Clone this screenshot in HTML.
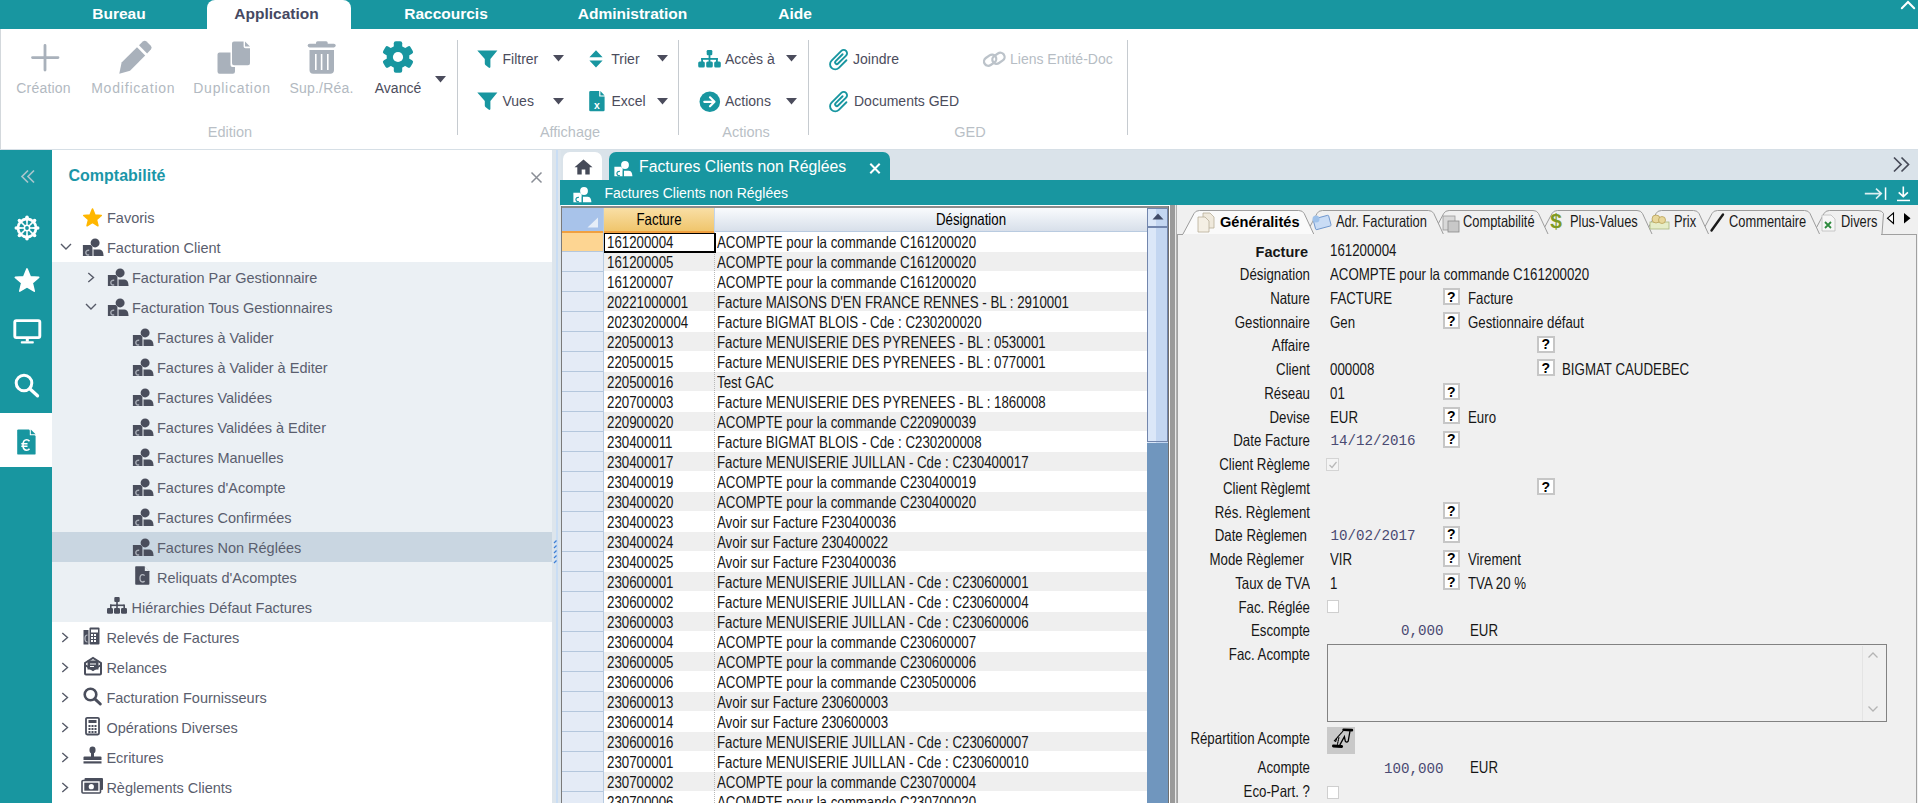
<!DOCTYPE html>
<html><head><meta charset="utf-8"><title>Factures Clients non Réglées</title><style>*{box-sizing:border-box;margin:0;padding:0}
html,body{width:1918px;height:803px;overflow:hidden;background:#fff;font-family:"Liberation Sans",sans-serif}
body{position:relative}
.t{position:absolute;white-space:nowrap}
.b{position:absolute}
svg.b{overflow:visible}</style></head><body>
<div class="b" style="left:0.00px;top:0.00px;width:1918.00px;height:29.00px;background:#1896a0;"></div>
<div class="b" style="left:207px;top:0px;width:144px;height:29px;background:#fff;border-radius:8px 8px 0 0"></div>
<div class="t" style="left:-481.00px;top:4.43px;width:1200px;line-height:19px;font-size:15.50px;color:#fff;font-weight:bold;text-align:center;">Bureau</div>
<div class="t" style="left:-323.50px;top:4.43px;width:1200px;line-height:19px;font-size:15.50px;color:#454862;font-weight:bold;text-align:center;">Application</div>
<div class="t" style="left:-154.00px;top:4.43px;width:1200px;line-height:19px;font-size:15.50px;color:#fff;font-weight:bold;text-align:center;">Raccourcis</div>
<div class="t" style="left:32.50px;top:4.43px;width:1200px;line-height:19px;font-size:15.50px;color:#fff;font-weight:bold;text-align:center;">Administration</div>
<div class="t" style="left:195.00px;top:4.43px;width:1200px;line-height:19px;font-size:15.50px;color:#fff;font-weight:bold;text-align:center;">Aide</div>
<svg class="b" style="left:1900.00px;top:0.00px;" width="16.00" height="10.00" viewBox="0 0 16 10"><path d="M1.8 8.3 L8 2 L14.2 8.3" stroke="#fff" stroke-width="2" fill="none" stroke-linecap="round"/></svg>
<div class="b" style="left:0.00px;top:29.00px;width:1918.00px;height:120.00px;background:#fff;"></div>
<div class="b" style="left:0.00px;top:29.00px;width:1.00px;height:120.00px;background:#d3d8dc;"></div>
<div class="b" style="left:0.00px;top:148.60px;width:1918.00px;height:1.40px;background:#d6dfe6;"></div>
<svg class="b" style="left:30.00px;top:43.00px;" width="30.00" height="30.00" viewBox="0 0 30 30"><path d="M15 2.5 V27 M2.5 14.6 H28" stroke="#a9b1bb" stroke-width="2.8" stroke-linecap="round"/></svg>
<svg class="b" style="left:117.00px;top:39.00px;" width="36.00" height="37.00" viewBox="0 0 36 37"><path d="M2.3 34.7 L4.6 23.5 L20 8.3 L28.2 16.5 L13 31.7 Z" fill="#a9b1bb"/><path d="M22 6.3 L25.8 2.6 Q27.7 0.8 29.6 2.6 L33.8 6.8 Q35.6 8.7 33.8 10.6 L30.1 14.4 Z" fill="#a9b1bb"/></svg>
<svg class="b" style="left:216.00px;top:40.00px;" width="36.00" height="36.00" viewBox="0 0 36 36"><path d="M3.5 12.5 Q1.5 12.5 1.5 14.5 V31.5 Q1.5 33.7 3.5 33.7 H16.8 Q19 33.7 19 31.5 V27 H16.5 Q14.5 27 14.5 25 V12.5 Z" fill="#a9b1bb"/><path d="M18 1.4 Q16 1.4 16 3.4 V23.3 Q16 25.3 18 25.3 H32 Q34 25.3 34 23.3 V8.2 H29.4 Q27.6 8.2 27.6 6.4 V1.4 Z" fill="#a9b1bb"/><path d="M29 1.4 L34 6.6 H29 Z" fill="#a9b1bb"/></svg>
<svg class="b" style="left:306.00px;top:40.00px;" width="32.00" height="36.00" viewBox="0 0 32 36"><rect x="1.7" y="3.8" width="28" height="3.6" rx="1.8" fill="#a9b1bb"/><rect x="10" y="1.2" width="11.7" height="4" rx="1.6" fill="#a9b1bb"/><path d="M3.5 10 H28 V30 Q28 33.7 24.3 33.7 H7.2 Q3.5 33.7 3.5 30 Z" fill="#a9b1bb"/><rect x="9" y="14" width="1.6" height="16" fill="#fff"/><rect x="14.8" y="14" width="1.6" height="16" fill="#fff"/><rect x="21" y="14" width="1.6" height="16" fill="#fff"/></svg>
<svg class="b" style="left:381.00px;top:40.00px;" width="34.00" height="34.00" viewBox="-17 -17 34 34"><g fill="#1896a0"><rect x="-4.2" y="-15.8" width="8.4" height="9" rx="2" transform="rotate(0)"/><rect x="-4.2" y="-15.8" width="8.4" height="9" rx="2" transform="rotate(60)"/><rect x="-4.2" y="-15.8" width="8.4" height="9" rx="2" transform="rotate(120)"/><rect x="-4.2" y="-15.8" width="8.4" height="9" rx="2" transform="rotate(180)"/><rect x="-4.2" y="-15.8" width="8.4" height="9" rx="2" transform="rotate(240)"/><rect x="-4.2" y="-15.8" width="8.4" height="9" rx="2" transform="rotate(300)"/><circle r="11.3"/></g><circle r="5.1" fill="#fff"/></svg>
<svg class="b" style="left:434.50px;top:76.30px;" width="11.00" height="6.60" viewBox="0 0 11 6.6"><path d="M0 0 H11 L5.5 6.6 Z" fill="#4b4c5c"/></svg>
<div class="t" style="left:-556.50px;top:78.65px;width:1200px;line-height:18px;font-size:14.00px;color:#b2b9c1;text-align:center;letter-spacing:0.20px;">Création</div>
<div class="t" style="left:-466.70px;top:78.65px;width:1200px;line-height:18px;font-size:14.00px;color:#b2b9c1;text-align:center;letter-spacing:0.80px;">Modification</div>
<div class="t" style="left:-368.00px;top:78.65px;width:1200px;line-height:18px;font-size:14.00px;color:#b2b9c1;text-align:center;letter-spacing:0.75px;">Duplication</div>
<div class="t" style="left:-278.50px;top:78.65px;width:1200px;line-height:18px;font-size:14.00px;color:#b2b9c1;text-align:center;letter-spacing:0.20px;">Sup./Réa.</div>
<div class="t" style="left:-202.00px;top:78.65px;width:1200px;line-height:18px;font-size:14.00px;color:#4b4c5c;text-align:center;letter-spacing:0.00px;">Avancé</div>
<div class="b" style="left:456.50px;top:40.00px;width:1.30px;height:95.00px;background:#c6cbd0;"></div>
<div class="b" style="left:678.00px;top:40.00px;width:1.30px;height:95.00px;background:#c6cbd0;"></div>
<div class="b" style="left:807.50px;top:40.00px;width:1.30px;height:95.00px;background:#c6cbd0;"></div>
<div class="b" style="left:1127.00px;top:40.00px;width:1.30px;height:95.00px;background:#c6cbd0;"></div>
<div class="t" style="left:-370.00px;top:123.48px;width:1200px;line-height:18px;font-size:14.50px;color:#b9bfc6;text-align:center;">Edition</div>
<div class="t" style="left:-30.00px;top:123.48px;width:1200px;line-height:18px;font-size:14.50px;color:#b9bfc6;text-align:center;">Affichage</div>
<div class="t" style="left:146.00px;top:123.48px;width:1200px;line-height:18px;font-size:14.50px;color:#b9bfc6;text-align:center;">Actions</div>
<div class="t" style="left:370.00px;top:123.48px;width:1200px;line-height:18px;font-size:14.50px;color:#b9bfc6;text-align:center;">GED</div>
<svg class="b" style="left:477.00px;top:49.70px;" width="21.00" height="19.00" viewBox="0 0 21 19"><path d="M0.3 0.6 H20.4 L13.4 9 V16.8 Q13.4 18.6 11.6 17.6 L8.7 15.2 Q7.8 14.6 7.8 13.5 V9 Z" fill="#1896a0"/></svg>
<svg class="b" style="left:477.00px;top:92.40px;" width="21.00" height="19.00" viewBox="0 0 21 19"><path d="M0.3 0.6 H20.4 L13.4 9 V16.8 Q13.4 18.6 11.6 17.6 L8.7 15.2 Q7.8 14.6 7.8 13.5 V9 Z" fill="#1896a0"/></svg>
<div class="t" style="left:502.50px;top:49.65px;line-height:18px;font-size:14.00px;color:#4b4c5c;text-align:left;">Filtrer</div>
<svg class="b" style="left:553.20px;top:55.30px;" width="11.00" height="6.60" viewBox="0 0 11 6.6"><path d="M0 0 H11 L5.5 6.6 Z" fill="#4b4c5c"/></svg>
<div class="t" style="left:502.50px;top:92.45px;line-height:18px;font-size:14.00px;color:#4b4c5c;text-align:left;">Vues</div>
<svg class="b" style="left:553.20px;top:98.30px;" width="11.00" height="6.60" viewBox="0 0 11 6.6"><path d="M0 0 H11 L5.5 6.6 Z" fill="#4b4c5c"/></svg>
<svg class="b" style="left:589.00px;top:49.50px;" width="14.00" height="18.00" viewBox="0 0 14 18"><path d="M7 0.3 L13.6 7.2 H0.4 Z M0.4 10.6 H13.6 L7 17.6 Z" fill="#1896a0"/></svg>
<div class="t" style="left:611.30px;top:49.65px;line-height:18px;font-size:14.00px;color:#4b4c5c;text-align:left;">Trier</div>
<svg class="b" style="left:656.70px;top:55.30px;" width="11.00" height="6.60" viewBox="0 0 11 6.6"><path d="M0 0 H11 L5.5 6.6 Z" fill="#4b4c5c"/></svg>
<svg class="b" style="left:588.50px;top:91.00px;" width="16.00" height="21.00" viewBox="0 0 16 21"><path d="M1.5 0 H10.2 V5.6 H15.6 V19 Q15.6 20.3 14.3 20.3 H1.5 Q0.2 20.3 0.2 19 V1.3 Q0.2 0 1.5 0 Z" fill="#1896a0"/><path d="M11.4 0 L15.6 4.4 H11.4 Z" fill="#1896a0"/><text x="7.9" y="17.6" font-family="Liberation Sans" font-weight="bold" font-size="10.5" fill="#fff" text-anchor="middle">x</text></svg>
<div class="t" style="left:611.50px;top:92.45px;line-height:18px;font-size:14.00px;color:#4b4c5c;text-align:left;">Excel</div>
<svg class="b" style="left:656.70px;top:98.30px;" width="11.00" height="6.60" viewBox="0 0 11 6.6"><path d="M0 0 H11 L5.5 6.6 Z" fill="#4b4c5c"/></svg>
<svg class="b" style="left:698.00px;top:49.50px;" width="23.00" height="18.00" viewBox="0 0 23 18"><g fill="#1896a0"><rect x="8.7" y="0" width="5.6" height="5.2" rx="1.2"/><rect x="10.6" y="4" width="1.8" height="5"/><rect x="3.2" y="8" width="16.6" height="1.8"/><rect x="3.2" y="8" width="1.8" height="5"/><rect x="10.6" y="8" width="1.8" height="5"/><rect x="18" y="8" width="1.8" height="5"/><rect x="0.2" y="11.5" width="6.6" height="6" rx="1.5"/><rect x="8.2" y="11.5" width="6.6" height="6" rx="1.5"/><rect x="16.2" y="11.5" width="6.6" height="6" rx="1.5"/></g></svg>
<div class="t" style="left:725.00px;top:49.65px;line-height:18px;font-size:14.00px;color:#4b4c5c;text-align:left;">Accès à</div>
<svg class="b" style="left:785.60px;top:55.30px;" width="11.00" height="6.60" viewBox="0 0 11 6.6"><path d="M0 0 H11 L5.5 6.6 Z" fill="#4b4c5c"/></svg>
<svg class="b" style="left:699.00px;top:90.50px;" width="22.00" height="22.00" viewBox="0 0 22 22"><circle cx="10.8" cy="10.8" r="10.3" fill="#1896a0"/><path d="M5.3 10.8 H15.5 M11 6.3 L15.5 10.8 L11 15.3" stroke="#fff" stroke-width="2.2" fill="none" stroke-linecap="round" stroke-linejoin="round"/></svg>
<div class="t" style="left:725.00px;top:92.45px;line-height:18px;font-size:14.00px;color:#4b4c5c;text-align:left;">Actions</div>
<svg class="b" style="left:785.60px;top:98.30px;" width="11.00" height="6.60" viewBox="0 0 11 6.6"><path d="M0 0 H11 L5.5 6.6 Z" fill="#4b4c5c"/></svg>
<svg class="b" style="left:827.50px;top:47.50px;" width="22.00" height="22.00" viewBox="0 0 22 22"><g transform="translate(11.2 11.3) rotate(45)"><path d="M-1.2 -6 V3.8 A1.7 1.7 0 0 0 2.2 3.8 V-7.5 A3.35 3.35 0 0 0 -4.5 -7.5 V6.3 A5.15 5.15 0 0 0 5.8 6.3 V-4.4" stroke="#1896a0" stroke-width="1.9" fill="none" stroke-linecap="round"/></g></svg>
<svg class="b" style="left:827.50px;top:89.50px;" width="22.00" height="22.00" viewBox="0 0 22 22"><g transform="translate(11.2 11.3) rotate(45)"><path d="M-1.2 -6 V3.8 A1.7 1.7 0 0 0 2.2 3.8 V-7.5 A3.35 3.35 0 0 0 -4.5 -7.5 V6.3 A5.15 5.15 0 0 0 5.8 6.3 V-4.4" stroke="#1896a0" stroke-width="1.9" fill="none" stroke-linecap="round"/></g></svg>
<div class="t" style="left:853.00px;top:49.65px;line-height:18px;font-size:14.00px;color:#4b4c5c;text-align:left;">Joindre</div>
<div class="t" style="left:854.00px;top:92.45px;line-height:18px;font-size:14.00px;color:#4b4c5c;text-align:left;">Documents GED</div>
<svg class="b" style="left:982.00px;top:49.50px;" width="25.00" height="19.00" viewBox="0 0 25 19"><g stroke="#bcc3ca" stroke-width="2.3" fill="none"><rect x="1.5" y="6" width="13" height="8.5" rx="4.2" transform="rotate(-35 8 10)"/><rect x="10" y="4" width="13" height="8.5" rx="4.2" transform="rotate(-35 16.5 8.3)"/></g></svg>
<div class="t" style="left:1010.00px;top:49.65px;line-height:18px;font-size:14.00px;color:#b6bdc4;text-align:left;">Liens Entité-Doc</div>
<div class="b" style="left:0.00px;top:150.00px;width:52.00px;height:653.00px;background:#1896a0;"></div>
<svg class="b" style="left:20.00px;top:169.00px;" width="16.00" height="15.00" viewBox="0 0 16 15"><path d="M8 1.5 L2 7.5 L8 13.5 M14 1.5 L8 7.5 L14 13.5" stroke="#a9c6cc" stroke-width="1.7" fill="none"/></svg>
<svg class="b" style="left:14.30px;top:215.30px;" width="26.00" height="26.00" viewBox="-13 -13 26 26"><g fill="#fff"><circle r="10.4"/><circle cx="0.00" cy="-10.70" r="1.8"/><circle cx="7.57" cy="-7.57" r="1.8"/><circle cx="10.70" cy="0.00" r="1.8"/><circle cx="7.57" cy="7.57" r="1.8"/><circle cx="0.00" cy="10.70" r="1.8"/><circle cx="-7.57" cy="7.57" r="1.8"/><circle cx="-10.70" cy="0.00" r="1.8"/><circle cx="-7.57" cy="-7.57" r="1.8"/></g><path d="M0.68 -3.54 L0.93 -7.54 A7.6 7.6 0 0 1 4.68 -5.99 L2.02 -2.98 Z M2.98 -2.02 L5.99 -4.68 A7.6 7.6 0 0 1 7.54 -0.93 L3.54 -0.68 Z M3.54 0.68 L7.54 0.93 A7.6 7.6 0 0 1 5.99 4.68 L2.98 2.02 Z M2.02 2.98 L4.68 5.99 A7.6 7.6 0 0 1 0.93 7.54 L0.68 3.54 Z M-0.68 3.54 L-0.93 7.54 A7.6 7.6 0 0 1 -4.68 5.99 L-2.02 2.98 Z M-2.98 2.02 L-5.99 4.68 A7.6 7.6 0 0 1 -7.54 0.93 L-3.54 0.68 Z M-3.54 -0.68 L-7.54 -0.93 A7.6 7.6 0 0 1 -5.99 -4.68 L-2.98 -2.02 Z M-2.02 -2.98 L-4.68 -5.99 A7.6 7.6 0 0 1 -0.93 -7.54 L-0.68 -3.54 Z" fill="#1896a0"/><circle r="1.9" fill="#1896a0"/></svg>
<svg class="b" style="left:13.00px;top:266.00px;" width="28.00" height="28.00" viewBox="0 0 28 28"><polygon points="14.00,2.90 17.25,10.72 25.70,11.40 19.26,16.91 21.23,25.15 14.00,20.73 6.77,25.15 8.74,16.91 2.30,11.40 10.75,10.72" fill="#fff" stroke="#fff" stroke-width="1.6" stroke-linejoin="round"/></svg>
<svg class="b" style="left:12.50px;top:319.00px;" width="29.00" height="26.00" viewBox="0 0 29 26"><rect x="1.8" y="1.6" width="25" height="17" rx="1.5" stroke="#fff" stroke-width="2.9" fill="none"/><rect x="12.8" y="19" width="3" height="3.5" fill="#fff"/><rect x="7.8" y="22.2" width="13" height="2.4" rx="0.8" fill="#fff"/></svg>
<svg class="b" style="left:14.00px;top:373.00px;" width="27.00" height="25.00" viewBox="0 0 27 25"><circle cx="10" cy="10" r="7.8" stroke="#fff" stroke-width="3" fill="none"/><path d="M15.8 15.8 L23.5 22.8" stroke="#fff" stroke-width="3.3" stroke-linecap="round"/></svg>
<div class="b" style="left:0.00px;top:413.00px;width:52.00px;height:54.00px;background:#fff;"></div>
<svg class="b" style="left:16.80px;top:429.00px;" width="19.00" height="26.00" viewBox="0 0 19 26"><path d="M1.4 0.4 H12 L18.6 7 V24.4 Q18.6 25.6 17.4 25.6 H1.4 Q0.2 25.6 0.2 24.4 V1.6 Q0.2 0.4 1.4 0.4 Z" fill="#1896a0"/><path d="M12.8 0.4 L18.6 6.2 H12.8 Z" fill="#fff"/><path d="M13.8 0.4 L18.6 5.2 H13.8 Z" fill="#1896a0"/><path d="M12.5 12.3 Q11.4 10.8 9.7 10.8 Q6 10.8 6 16 Q6 21.2 9.7 21.2 Q11.4 21.2 12.5 19.7 M4.3 14.8 H10.5 M4.3 17.3 H10.5" stroke="#fff" stroke-width="1.6" fill="none"/></svg>
<div class="b" style="left:52.00px;top:150.00px;width:500.00px;height:653.00px;background:#fff;"></div>
<div class="b" style="left:52.00px;top:262.00px;width:500.00px;height:360.00px;background:#ebf0f4;"></div>
<div class="b" style="left:52.00px;top:532.00px;width:500.00px;height:30.00px;background:#c9d6e1;"></div>
<div class="t" style="left:68.50px;top:166.46px;line-height:20px;font-size:16.00px;color:#1a96a8;font-weight:bold;text-align:left;">Comptabilité</div>
<svg class="b" style="left:529.50px;top:170.50px;" width="13.00" height="13.00" viewBox="0 0 13 13"><path d="M1.5 1.5 L11.5 11.5 M11.5 1.5 L1.5 11.5" stroke="#8a8e96" stroke-width="1.5"/></svg>
<svg class="b" style="left:81.50px;top:207.50px;" width="21.00" height="20.00" viewBox="0 0 21 20"><polygon points="10.50,1.10 12.93,6.95 19.25,7.46 14.44,11.58 15.91,17.74 10.50,14.44 5.09,17.74 6.56,11.58 1.75,7.46 8.07,6.95" fill="#ffb700" stroke="#ffb700" stroke-width="1.6" stroke-linejoin="round"/></svg>
<div class="t" style="left:107.00px;top:208.58px;line-height:18px;font-size:14.50px;color:#5a5e6e;text-align:left;">Favoris</div>
<svg class="b" style="left:60.20px;top:243.10px;" width="12.00" height="7.00" viewBox="0 0 12 7"><path d="M1 1 L6 6 L11 1" stroke="#565a68" stroke-width="1.4" fill="none"/></svg><svg class="b" style="left:78.80px;top:236.40px;" width="25.00" height="21.00" viewBox="0 0 25 21"><g fill="#4a4e5c"><circle cx="16.1" cy="6.9" r="4.5"/><path d="M3.9 9 H11.6 L13.4 10.8 V19.9 H3.9 Z"/><path d="M14.9 13.4 H20.3 Q23.4 13.4 24.2 17 L24.6 19.9 H14.9 Z"/></g><rect x="13.4" y="13.4" width="1.4" height="6.5" fill="#8d919b"/><path d="M10.2 14.3 Q7 14 6.8 16.7 Q7 19.3 10.2 19" stroke="#a8adb6" stroke-width="1.4" fill="none"/></svg><div class="t" style="left:107.00px;top:238.58px;line-height:18px;font-size:14.50px;color:#5a5e6e;text-align:left;">Facturation Client</div>
<svg class="b" style="left:87.20px;top:272.10px;" width="8.00" height="11.00" viewBox="0 0 8 11"><path d="M1.3 1 L6.5 5.5 L1.3 10" stroke="#565a68" stroke-width="1.4" fill="none"/></svg><svg class="b" style="left:103.80px;top:266.40px;" width="25.00" height="21.00" viewBox="0 0 25 21"><g fill="#4a4e5c"><circle cx="16.1" cy="6.9" r="4.5"/><path d="M3.9 9 H11.6 L13.4 10.8 V19.9 H3.9 Z"/><path d="M14.9 13.4 H20.3 Q23.4 13.4 24.2 17 L24.6 19.9 H14.9 Z"/></g><rect x="13.4" y="13.4" width="1.4" height="6.5" fill="#8d919b"/><path d="M10.2 14.3 Q7 14 6.8 16.7 Q7 19.3 10.2 19" stroke="#a8adb6" stroke-width="1.4" fill="none"/></svg><div class="t" style="left:132.00px;top:268.58px;line-height:18px;font-size:14.50px;color:#5a5e6e;text-align:left;">Facturation Par Gestionnaire</div>
<svg class="b" style="left:85.20px;top:303.10px;" width="12.00" height="7.00" viewBox="0 0 12 7"><path d="M1 1 L6 6 L11 1" stroke="#565a68" stroke-width="1.4" fill="none"/></svg><svg class="b" style="left:103.80px;top:296.40px;" width="25.00" height="21.00" viewBox="0 0 25 21"><g fill="#4a4e5c"><circle cx="16.1" cy="6.9" r="4.5"/><path d="M3.9 9 H11.6 L13.4 10.8 V19.9 H3.9 Z"/><path d="M14.9 13.4 H20.3 Q23.4 13.4 24.2 17 L24.6 19.9 H14.9 Z"/></g><rect x="13.4" y="13.4" width="1.4" height="6.5" fill="#8d919b"/><path d="M10.2 14.3 Q7 14 6.8 16.7 Q7 19.3 10.2 19" stroke="#a8adb6" stroke-width="1.4" fill="none"/></svg><div class="t" style="left:132.00px;top:298.58px;line-height:18px;font-size:14.50px;color:#5a5e6e;text-align:left;">Facturation Tous Gestionnaires</div>
<svg class="b" style="left:128.80px;top:326.40px;" width="25.00" height="21.00" viewBox="0 0 25 21"><g fill="#4a4e5c"><circle cx="16.1" cy="6.9" r="4.5"/><path d="M3.9 9 H11.6 L13.4 10.8 V19.9 H3.9 Z"/><path d="M14.9 13.4 H20.3 Q23.4 13.4 24.2 17 L24.6 19.9 H14.9 Z"/></g><rect x="13.4" y="13.4" width="1.4" height="6.5" fill="#8d919b"/><path d="M10.2 14.3 Q7 14 6.8 16.7 Q7 19.3 10.2 19" stroke="#a8adb6" stroke-width="1.4" fill="none"/></svg><div class="t" style="left:157.00px;top:328.58px;line-height:18px;font-size:14.50px;color:#5a5e6e;text-align:left;">Factures à Valider</div>
<svg class="b" style="left:128.80px;top:356.40px;" width="25.00" height="21.00" viewBox="0 0 25 21"><g fill="#4a4e5c"><circle cx="16.1" cy="6.9" r="4.5"/><path d="M3.9 9 H11.6 L13.4 10.8 V19.9 H3.9 Z"/><path d="M14.9 13.4 H20.3 Q23.4 13.4 24.2 17 L24.6 19.9 H14.9 Z"/></g><rect x="13.4" y="13.4" width="1.4" height="6.5" fill="#8d919b"/><path d="M10.2 14.3 Q7 14 6.8 16.7 Q7 19.3 10.2 19" stroke="#a8adb6" stroke-width="1.4" fill="none"/></svg><div class="t" style="left:157.00px;top:358.58px;line-height:18px;font-size:14.50px;color:#5a5e6e;text-align:left;">Factures à Valider à Editer</div>
<svg class="b" style="left:128.80px;top:386.40px;" width="25.00" height="21.00" viewBox="0 0 25 21"><g fill="#4a4e5c"><circle cx="16.1" cy="6.9" r="4.5"/><path d="M3.9 9 H11.6 L13.4 10.8 V19.9 H3.9 Z"/><path d="M14.9 13.4 H20.3 Q23.4 13.4 24.2 17 L24.6 19.9 H14.9 Z"/></g><rect x="13.4" y="13.4" width="1.4" height="6.5" fill="#8d919b"/><path d="M10.2 14.3 Q7 14 6.8 16.7 Q7 19.3 10.2 19" stroke="#a8adb6" stroke-width="1.4" fill="none"/></svg><div class="t" style="left:157.00px;top:388.58px;line-height:18px;font-size:14.50px;color:#5a5e6e;text-align:left;">Factures Validées</div>
<svg class="b" style="left:128.80px;top:416.40px;" width="25.00" height="21.00" viewBox="0 0 25 21"><g fill="#4a4e5c"><circle cx="16.1" cy="6.9" r="4.5"/><path d="M3.9 9 H11.6 L13.4 10.8 V19.9 H3.9 Z"/><path d="M14.9 13.4 H20.3 Q23.4 13.4 24.2 17 L24.6 19.9 H14.9 Z"/></g><rect x="13.4" y="13.4" width="1.4" height="6.5" fill="#8d919b"/><path d="M10.2 14.3 Q7 14 6.8 16.7 Q7 19.3 10.2 19" stroke="#a8adb6" stroke-width="1.4" fill="none"/></svg><div class="t" style="left:157.00px;top:418.58px;line-height:18px;font-size:14.50px;color:#5a5e6e;text-align:left;">Factures Validées à Editer</div>
<svg class="b" style="left:128.80px;top:446.40px;" width="25.00" height="21.00" viewBox="0 0 25 21"><g fill="#4a4e5c"><circle cx="16.1" cy="6.9" r="4.5"/><path d="M3.9 9 H11.6 L13.4 10.8 V19.9 H3.9 Z"/><path d="M14.9 13.4 H20.3 Q23.4 13.4 24.2 17 L24.6 19.9 H14.9 Z"/></g><rect x="13.4" y="13.4" width="1.4" height="6.5" fill="#8d919b"/><path d="M10.2 14.3 Q7 14 6.8 16.7 Q7 19.3 10.2 19" stroke="#a8adb6" stroke-width="1.4" fill="none"/></svg><div class="t" style="left:157.00px;top:448.58px;line-height:18px;font-size:14.50px;color:#5a5e6e;text-align:left;">Factures Manuelles</div>
<svg class="b" style="left:128.80px;top:476.40px;" width="25.00" height="21.00" viewBox="0 0 25 21"><g fill="#4a4e5c"><circle cx="16.1" cy="6.9" r="4.5"/><path d="M3.9 9 H11.6 L13.4 10.8 V19.9 H3.9 Z"/><path d="M14.9 13.4 H20.3 Q23.4 13.4 24.2 17 L24.6 19.9 H14.9 Z"/></g><rect x="13.4" y="13.4" width="1.4" height="6.5" fill="#8d919b"/><path d="M10.2 14.3 Q7 14 6.8 16.7 Q7 19.3 10.2 19" stroke="#a8adb6" stroke-width="1.4" fill="none"/></svg><div class="t" style="left:157.00px;top:478.58px;line-height:18px;font-size:14.50px;color:#5a5e6e;text-align:left;">Factures d'Acompte</div>
<svg class="b" style="left:128.80px;top:506.40px;" width="25.00" height="21.00" viewBox="0 0 25 21"><g fill="#4a4e5c"><circle cx="16.1" cy="6.9" r="4.5"/><path d="M3.9 9 H11.6 L13.4 10.8 V19.9 H3.9 Z"/><path d="M14.9 13.4 H20.3 Q23.4 13.4 24.2 17 L24.6 19.9 H14.9 Z"/></g><rect x="13.4" y="13.4" width="1.4" height="6.5" fill="#8d919b"/><path d="M10.2 14.3 Q7 14 6.8 16.7 Q7 19.3 10.2 19" stroke="#a8adb6" stroke-width="1.4" fill="none"/></svg><div class="t" style="left:157.00px;top:508.58px;line-height:18px;font-size:14.50px;color:#5a5e6e;text-align:left;">Factures Confirmées</div>
<svg class="b" style="left:128.80px;top:536.40px;" width="25.00" height="21.00" viewBox="0 0 25 21"><g fill="#4a4e5c"><circle cx="16.1" cy="6.9" r="4.5"/><path d="M3.9 9 H11.6 L13.4 10.8 V19.9 H3.9 Z"/><path d="M14.9 13.4 H20.3 Q23.4 13.4 24.2 17 L24.6 19.9 H14.9 Z"/></g><rect x="13.4" y="13.4" width="1.4" height="6.5" fill="#8d919b"/><path d="M10.2 14.3 Q7 14 6.8 16.7 Q7 19.3 10.2 19" stroke="#a8adb6" stroke-width="1.4" fill="none"/></svg><div class="t" style="left:157.00px;top:538.58px;line-height:18px;font-size:14.50px;color:#5a5e6e;text-align:left;">Factures Non Réglées</div>
<svg class="b" style="left:135.00px;top:565.60px;" width="15.00" height="19.00" viewBox="0 0 15 19"><path d="M1 0.3 H9.5 L14.4 5.2 V17.8 Q14.4 18.7 13.5 18.7 H1 Q0.2 18.7 0.2 17.8 V1.1 Q0.2 0.3 1 0.3 Z" fill="#4a4e5c"/><path d="M9.8 0.3 L14.4 4.9 H9.8 Z" fill="#ebf0f4"/><path d="M9.6 9.6 Q8.8 8.6 7.6 8.6 Q5 8.6 5 12.3 Q5 16 7.6 16 Q8.8 16 9.6 15" stroke="#b4b8c0" stroke-width="1.3" fill="none"/></svg>
<div class="t" style="left:157.00px;top:568.58px;line-height:18px;font-size:14.50px;color:#5a5e6e;text-align:left;">Reliquats d'Acomptes</div>
<svg class="b" style="left:107.00px;top:597.10px;" width="20.00" height="17.00" viewBox="0 0 20 17"><g fill="#4a4e5c"><rect x="7.3" y="0" width="5.4" height="5" rx="1"/><rect x="9.2" y="4" width="1.6" height="4.5"/><rect x="3" y="7.5" width="14" height="1.6"/><rect x="3" y="7.5" width="1.6" height="4"/><rect x="16.4" y="7.5" width="1.6" height="4"/><rect x="9.2" y="7.5" width="1.6" height="4"/><rect x="0" y="11" width="6" height="5.8" rx="1.3"/><rect x="7" y="11" width="6" height="5.8" rx="1.3"/><rect x="14" y="11" width="6" height="5.8" rx="1.3"/></g></svg>
<div class="t" style="left:131.50px;top:598.58px;line-height:18px;font-size:14.50px;color:#5a5e6e;text-align:left;">Hiérarchies Défaut Factures</div>
<svg class="b" style="left:60.80px;top:632.10px;" width="8.00" height="11.00" viewBox="0 0 8 11"><path d="M1.3 1 L6.5 5.5 L1.3 10" stroke="#565a68" stroke-width="1.4" fill="none"/></svg>
<div class="t" style="left:106.40px;top:628.58px;line-height:18px;font-size:14.50px;color:#5a5e6e;text-align:left;">Relevés de Factures</div>
<svg class="b" style="left:60.80px;top:662.10px;" width="8.00" height="11.00" viewBox="0 0 8 11"><path d="M1.3 1 L6.5 5.5 L1.3 10" stroke="#565a68" stroke-width="1.4" fill="none"/></svg>
<div class="t" style="left:106.40px;top:658.58px;line-height:18px;font-size:14.50px;color:#5a5e6e;text-align:left;">Relances</div>
<svg class="b" style="left:60.80px;top:692.10px;" width="8.00" height="11.00" viewBox="0 0 8 11"><path d="M1.3 1 L6.5 5.5 L1.3 10" stroke="#565a68" stroke-width="1.4" fill="none"/></svg>
<div class="t" style="left:106.40px;top:688.58px;line-height:18px;font-size:14.50px;color:#5a5e6e;text-align:left;">Facturation Fournisseurs</div>
<svg class="b" style="left:60.80px;top:722.10px;" width="8.00" height="11.00" viewBox="0 0 8 11"><path d="M1.3 1 L6.5 5.5 L1.3 10" stroke="#565a68" stroke-width="1.4" fill="none"/></svg>
<div class="t" style="left:106.40px;top:718.58px;line-height:18px;font-size:14.50px;color:#5a5e6e;text-align:left;">Opérations Diverses</div>
<svg class="b" style="left:60.80px;top:752.10px;" width="8.00" height="11.00" viewBox="0 0 8 11"><path d="M1.3 1 L6.5 5.5 L1.3 10" stroke="#565a68" stroke-width="1.4" fill="none"/></svg>
<div class="t" style="left:106.40px;top:748.58px;line-height:18px;font-size:14.50px;color:#5a5e6e;text-align:left;">Ecritures</div>
<svg class="b" style="left:60.80px;top:782.10px;" width="8.00" height="11.00" viewBox="0 0 8 11"><path d="M1.3 1 L6.5 5.5 L1.3 10" stroke="#565a68" stroke-width="1.4" fill="none"/></svg>
<div class="t" style="left:106.40px;top:778.58px;line-height:18px;font-size:14.50px;color:#5a5e6e;text-align:left;">Règlements Clients</div>
<svg class="b" style="left:83.00px;top:626.60px;" width="17.00" height="18.00" viewBox="0 0 17 18"><g fill="#4a4e5c"><rect x="0.5" y="3" width="5" height="14.5"/><rect x="6.5" y="0.5" width="10" height="17" rx="1"/></g><g fill="#fff"><rect x="8" y="2.5" width="7" height="3"/><rect x="8" y="7" width="2" height="2"/><rect x="11" y="7" width="2" height="2"/><rect x="8" y="10" width="2" height="2"/><rect x="11" y="10" width="2" height="2"/><rect x="8" y="13" width="2" height="2"/><rect x="11" y="13" width="2" height="2"/></g><path d="M4.5 8 Q2 8 2 11.5 Q2 15 4.5 15" stroke="#b4b8c0" stroke-width="1.2" fill="none"/></svg>
<svg class="b" style="left:82.50px;top:656.60px;" width="20.00" height="18.00" viewBox="0 0 20 18"><path d="M2 6 L10 1 L18 6 V16.5 Q18 17.5 17 17.5 H3 Q2 17.5 2 16.5 Z" fill="none" stroke="#4a4e5c" stroke-width="2"/><rect x="4.5" y="3.5" width="11" height="9" fill="#4a4e5c"/><path d="M2 8 L10 13 L18 8" stroke="#4a4e5c" stroke-width="2" fill="none"/><path d="M7 7 H13 M7 9.5 H11" stroke="#fff" stroke-width="1.2"/></svg>
<svg class="b" style="left:83.00px;top:686.60px;" width="19.00" height="18.00" viewBox="0 0 19 18"><circle cx="7.5" cy="7.5" r="5.8" stroke="#4a4e5c" stroke-width="2.6" fill="none"/><path d="M11.8 11.8 L17.3 17" stroke="#4a4e5c" stroke-width="3" stroke-linecap="round"/></svg>
<svg class="b" style="left:85.00px;top:716.60px;" width="15.00" height="18.00" viewBox="0 0 15 18"><rect x="1" y="0.8" width="13" height="16.7" rx="1.2" fill="none" stroke="#4a4e5c" stroke-width="1.8"/><rect x="3.5" y="3" width="8" height="3" fill="#4a4e5c"/><g fill="#4a4e5c"><rect x="3.5" y="8" width="2" height="2"/><rect x="6.5" y="8" width="2" height="2"/><rect x="9.5" y="8" width="2" height="2"/><rect x="3.5" y="11" width="2" height="2"/><rect x="6.5" y="11" width="2" height="2"/><rect x="9.5" y="11" width="2" height="2"/><rect x="3.5" y="14" width="2" height="2"/><rect x="6.5" y="14" width="2" height="2"/><rect x="9.5" y="14" width="2" height="2"/></g></svg>
<svg class="b" style="left:83.00px;top:745.60px;" width="19.00" height="18.00" viewBox="0 0 19 18"><g fill="#4a4e5c"><rect x="6.5" y="0.5" width="6" height="7" rx="3"/><rect x="8" y="6" width="3" height="5"/><path d="M1.5 10.5 H17.5 Q18.5 10.5 18.5 11.5 V14 H0.5 V11.5 Q0.5 10.5 1.5 10.5 Z"/><rect x="0.5" y="15.3" width="18" height="2.2"/></g></svg>
<svg class="b" style="left:81.00px;top:776.60px;" width="23.00" height="17.00" viewBox="0 0 23 17"><rect x="3.5" y="1" width="18.5" height="12" rx="1" fill="#4a4e5c"/><rect x="1" y="3.5" width="18.5" height="12.5" rx="1" fill="#fff" stroke="#4a4e5c" stroke-width="1.6"/><rect x="3.3" y="5.7" width="14" height="8" fill="#4a4e5c"/><circle cx="10.3" cy="9.7" r="2.6" fill="#fff"/></svg>
<div class="b" style="left:552.00px;top:150.00px;width:9.00px;height:653.00px;background:#dde5ec;"></div>
<div class="b" style="left:556.00px;top:150.00px;width:2.00px;height:653.00px;background:#c9ddf4;"></div>
<svg class="b" style="left:553.00px;top:540.00px;" width="5.00" height="25.00" viewBox="0 0 5 25"><g stroke="#3d7fd6" stroke-width="1.2"><path d="M1 3 L3.5 0.5"/><path d="M1 8 L3.5 5.5"/><path d="M1 13 L3.5 10.5"/><path d="M1 18 L3.5 15.5"/><path d="M1 23 L3.5 20.5"/></g></svg>
<div class="b" style="left:561.00px;top:150.00px;width:1357.00px;height:30.00px;background:#dae3ea;"></div>
<div class="b" style="left:562.5px;top:152px;width:39.5px;height:28px;background:#fff;border-radius:7px 7px 0 0"></div>
<svg class="b" style="left:574.00px;top:159.00px;" width="19.00" height="16.00" viewBox="0 0 19 16"><path d="M9.5 0.5 L18.5 8.3 H15.7 V15.5 H11.3 V10.5 H7.7 V15.5 H3.3 V8.3 H0.5 Z" fill="#454a58"/></svg>
<div class="b" style="left:608.5px;top:152px;width:281px;height:30px;background:#1896a0;border-radius:7px 7px 0 0"></div>
<svg class="b" style="left:611.40px;top:159.10px;" width="21.75" height="18.30" viewBox="0 0 25 21"><g fill="#fff"><circle cx="16.1" cy="6.9" r="4.5"/><path d="M3.9 9 H11.6 L13.4 10.8 V19.9 H3.9 Z"/><path d="M14.9 13.4 H20.3 Q23.4 13.4 24.2 17 L24.6 19.9 H14.9 Z"/></g><rect x="13.4" y="13.4" width="1.4" height="6.5" fill="#1896a0" opacity="0.6"/><path d="M10.2 14.3 Q7 14 6.8 16.7 Q7 19.3 10.2 19" stroke="#1896a0" stroke-width="1.4" fill="none"/></svg>
<div class="t" style="left:639.00px;top:157.23px;line-height:20px;font-size:15.80px;color:#fff;text-align:left;">Factures Clients non Réglées</div>
<svg class="b" style="left:869.00px;top:162.50px;" width="12.00" height="11.00" viewBox="0 0 12 11"><path d="M1.3 0.8 L10.7 10.2 M10.7 0.8 L1.3 10.2" stroke="#fff" stroke-width="2"/></svg>
<svg class="b" style="left:1892.00px;top:156.00px;" width="20.00" height="17.00" viewBox="0 0 20 17"><path d="M2 1.5 L9 8.5 L2 15.5 M9.5 1.5 L16.5 8.5 L9.5 15.5" stroke="#474b58" stroke-width="1.7" fill="none"/></svg>
<div class="b" style="left:560.00px;top:180.00px;width:1358.00px;height:25.00px;background:#1896a0;"></div>
<svg class="b" style="left:570.30px;top:185.30px;" width="21.75" height="18.30" viewBox="0 0 25 21"><g fill="#fff"><circle cx="16.1" cy="6.9" r="4.5"/><path d="M3.9 9 H11.6 L13.4 10.8 V19.9 H3.9 Z"/><path d="M14.9 13.4 H20.3 Q23.4 13.4 24.2 17 L24.6 19.9 H14.9 Z"/></g><rect x="13.4" y="13.4" width="1.4" height="6.5" fill="#1896a0" opacity="0.6"/><path d="M10.2 14.3 Q7 14 6.8 16.7 Q7 19.3 10.2 19" stroke="#1896a0" stroke-width="1.4" fill="none"/></svg>
<div class="t" style="left:604.40px;top:184.35px;line-height:18px;font-size:14.00px;color:#fff;text-align:left;">Factures Clients non Réglées</div>
<svg class="b" style="left:1863.00px;top:186.00px;" width="26.00" height="15.00" viewBox="0 0 26 15"><path d="M1.8 7.6 H18 M13 2.6 L18.3 7.6 L13 12.6" stroke="#fff" stroke-opacity="0.85" stroke-width="1.6" fill="none"/><rect x="21.8" y="1.4" width="1.5" height="12.5" fill="#fff"/></svg>
<svg class="b" style="left:1896.00px;top:186.00px;" width="16.00" height="16.00" viewBox="0 0 16 16"><path d="M7.3 0.6 V10.3 M2.7 6.3 L7.3 10.6 L11.9 6.3" stroke="#fff" stroke-width="1.6" fill="none"/><rect x="1" y="13.7" width="13" height="1.5" fill="#fff"/></svg>
<div class="b" style="left:561.00px;top:205.00px;width:608.00px;height:598.00px;background:#fff;"></div>
<div class="b" style="left:561.00px;top:205.50px;width:608.00px;height:2.00px;background:#8c8c8c;"></div>
<div class="b" style="left:561.00px;top:205.50px;width:1.30px;height:598.00px;background:#7a7a7a;"></div>
<div class="b" style="left:562.30px;top:207.50px;width:40.70px;height:24.00px;background:#a8c3ea;"></div>
<svg class="b" style="left:587.00px;top:217.00px;" width="12.00" height="11.00" viewBox="0 0 12 11"><path d="M11 0.5 V10.5 H0.5 Z" fill="#e6eef8"/></svg>
<div class="b" style="left:603.00px;top:207.50px;width:111.00px;height:24.00px;background:linear-gradient(#f9dfa6,#efc46a);"></div>
<div class="b" style="left:603.00px;top:231.00px;width:111.00px;height:1.60px;background:#f0a040;"></div>
<div class="b" style="left:714.00px;top:207.50px;width:433.00px;height:24.00px;background:linear-gradient(#f9fbfd,#d6dee9);"></div>
<div class="b" style="left:714.00px;top:231.00px;width:433.00px;height:1.20px;background:#b9cbe0;"></div>
<div class="b" style="left:714.00px;top:207.50px;width:1.00px;height:24.00px;background:#c2d4ea;"></div>
<div class="t" style="left:59.00px;top:208.68px;width:1200px;line-height:21px;font-size:16.50px;color:#000;text-align:center;transform:scaleX(0.8050);transform-origin:center;">Facture</div>
<div class="t" style="left:370.50px;top:208.68px;width:1200px;line-height:21px;font-size:16.50px;color:#000;text-align:center;transform:scaleX(0.8050);transform-origin:center;">Désignation</div>
<div class="b" style="left:562.30px;top:232.00px;width:40.70px;height:20.00px;background:#fdd592;"></div>
<div class="b" style="left:562.30px;top:251.20px;width:40.70px;height:1.60px;background:#b4c7dd;"></div>
<div class="t" style="left:607.00px;top:231.98px;line-height:21px;font-size:16.50px;color:#161616;text-align:left;transform:scaleX(0.8050);transform-origin:left;">161200004</div>
<div class="t" style="left:717.00px;top:231.98px;line-height:21px;font-size:16.50px;color:#161616;text-align:left;transform:scaleX(0.8050);transform-origin:left;">ACOMPTE pour la commande C161200020</div>
<div class="b" style="left:603.00px;top:252.00px;width:545.00px;height:19.00px;background:#efefef;"></div>
<div class="b" style="left:562.30px;top:252.00px;width:40.70px;height:20.00px;background:#e4ebf6;"></div>
<div class="b" style="left:562.30px;top:271.20px;width:40.70px;height:1.60px;background:#b4c7dd;"></div>
<div class="t" style="left:607.00px;top:251.98px;line-height:21px;font-size:16.50px;color:#161616;text-align:left;transform:scaleX(0.8050);transform-origin:left;">161200005</div>
<div class="t" style="left:717.00px;top:251.98px;line-height:21px;font-size:16.50px;color:#161616;text-align:left;transform:scaleX(0.8050);transform-origin:left;">ACOMPTE pour la commande C161200020</div>
<div class="b" style="left:562.30px;top:272.00px;width:40.70px;height:20.00px;background:#e4ebf6;"></div>
<div class="b" style="left:562.30px;top:291.20px;width:40.70px;height:1.60px;background:#b4c7dd;"></div>
<div class="t" style="left:607.00px;top:271.98px;line-height:21px;font-size:16.50px;color:#161616;text-align:left;transform:scaleX(0.8050);transform-origin:left;">161200007</div>
<div class="t" style="left:717.00px;top:271.98px;line-height:21px;font-size:16.50px;color:#161616;text-align:left;transform:scaleX(0.8050);transform-origin:left;">ACOMPTE pour la commande C161200020</div>
<div class="b" style="left:603.00px;top:292.00px;width:545.00px;height:19.00px;background:#efefef;"></div>
<div class="b" style="left:562.30px;top:292.00px;width:40.70px;height:20.00px;background:#e4ebf6;"></div>
<div class="b" style="left:562.30px;top:311.20px;width:40.70px;height:1.60px;background:#b4c7dd;"></div>
<div class="t" style="left:607.00px;top:291.98px;line-height:21px;font-size:16.50px;color:#161616;text-align:left;transform:scaleX(0.8050);transform-origin:left;">20221000001</div>
<div class="t" style="left:717.00px;top:291.98px;line-height:21px;font-size:16.50px;color:#161616;text-align:left;transform:scaleX(0.8050);transform-origin:left;">Facture MAISONS D'EN FRANCE RENNES - BL : 2910001</div>
<div class="b" style="left:562.30px;top:312.00px;width:40.70px;height:20.00px;background:#e4ebf6;"></div>
<div class="b" style="left:562.30px;top:331.20px;width:40.70px;height:1.60px;background:#b4c7dd;"></div>
<div class="t" style="left:607.00px;top:311.98px;line-height:21px;font-size:16.50px;color:#161616;text-align:left;transform:scaleX(0.8050);transform-origin:left;">20230200004</div>
<div class="t" style="left:717.00px;top:311.98px;line-height:21px;font-size:16.50px;color:#161616;text-align:left;transform:scaleX(0.8050);transform-origin:left;">Facture BIGMAT BLOIS - Cde : C230200020</div>
<div class="b" style="left:603.00px;top:332.00px;width:545.00px;height:19.00px;background:#efefef;"></div>
<div class="b" style="left:562.30px;top:332.00px;width:40.70px;height:20.00px;background:#e4ebf6;"></div>
<div class="b" style="left:562.30px;top:351.20px;width:40.70px;height:1.60px;background:#b4c7dd;"></div>
<div class="t" style="left:607.00px;top:331.98px;line-height:21px;font-size:16.50px;color:#161616;text-align:left;transform:scaleX(0.8050);transform-origin:left;">220500013</div>
<div class="t" style="left:717.00px;top:331.98px;line-height:21px;font-size:16.50px;color:#161616;text-align:left;transform:scaleX(0.8050);transform-origin:left;">Facture MENUISERIE DES PYRENEES - BL : 0530001</div>
<div class="b" style="left:562.30px;top:352.00px;width:40.70px;height:20.00px;background:#e4ebf6;"></div>
<div class="b" style="left:562.30px;top:371.20px;width:40.70px;height:1.60px;background:#b4c7dd;"></div>
<div class="t" style="left:607.00px;top:351.98px;line-height:21px;font-size:16.50px;color:#161616;text-align:left;transform:scaleX(0.8050);transform-origin:left;">220500015</div>
<div class="t" style="left:717.00px;top:351.98px;line-height:21px;font-size:16.50px;color:#161616;text-align:left;transform:scaleX(0.8050);transform-origin:left;">Facture MENUISERIE DES PYRENEES - BL : 0770001</div>
<div class="b" style="left:603.00px;top:372.00px;width:545.00px;height:19.00px;background:#efefef;"></div>
<div class="b" style="left:562.30px;top:372.00px;width:40.70px;height:20.00px;background:#e4ebf6;"></div>
<div class="b" style="left:562.30px;top:391.20px;width:40.70px;height:1.60px;background:#b4c7dd;"></div>
<div class="t" style="left:607.00px;top:371.98px;line-height:21px;font-size:16.50px;color:#161616;text-align:left;transform:scaleX(0.8050);transform-origin:left;">220500016</div>
<div class="t" style="left:717.00px;top:371.98px;line-height:21px;font-size:16.50px;color:#161616;text-align:left;transform:scaleX(0.8050);transform-origin:left;">Test GAC</div>
<div class="b" style="left:562.30px;top:392.00px;width:40.70px;height:20.00px;background:#e4ebf6;"></div>
<div class="b" style="left:562.30px;top:411.20px;width:40.70px;height:1.60px;background:#b4c7dd;"></div>
<div class="t" style="left:607.00px;top:391.98px;line-height:21px;font-size:16.50px;color:#161616;text-align:left;transform:scaleX(0.8050);transform-origin:left;">220700003</div>
<div class="t" style="left:717.00px;top:391.98px;line-height:21px;font-size:16.50px;color:#161616;text-align:left;transform:scaleX(0.8050);transform-origin:left;">Facture MENUISERIE DES PYRENEES - BL : 1860008</div>
<div class="b" style="left:603.00px;top:412.00px;width:545.00px;height:19.00px;background:#efefef;"></div>
<div class="b" style="left:562.30px;top:412.00px;width:40.70px;height:20.00px;background:#e4ebf6;"></div>
<div class="b" style="left:562.30px;top:431.20px;width:40.70px;height:1.60px;background:#b4c7dd;"></div>
<div class="t" style="left:607.00px;top:411.98px;line-height:21px;font-size:16.50px;color:#161616;text-align:left;transform:scaleX(0.8050);transform-origin:left;">220900020</div>
<div class="t" style="left:717.00px;top:411.98px;line-height:21px;font-size:16.50px;color:#161616;text-align:left;transform:scaleX(0.8050);transform-origin:left;">ACOMPTE pour la commande C220900039</div>
<div class="b" style="left:562.30px;top:432.00px;width:40.70px;height:20.00px;background:#e4ebf6;"></div>
<div class="b" style="left:562.30px;top:451.20px;width:40.70px;height:1.60px;background:#b4c7dd;"></div>
<div class="t" style="left:607.00px;top:431.98px;line-height:21px;font-size:16.50px;color:#161616;text-align:left;transform:scaleX(0.8050);transform-origin:left;">230400011</div>
<div class="t" style="left:717.00px;top:431.98px;line-height:21px;font-size:16.50px;color:#161616;text-align:left;transform:scaleX(0.8050);transform-origin:left;">Facture BIGMAT BLOIS - Cde : C230200008</div>
<div class="b" style="left:603.00px;top:452.00px;width:545.00px;height:19.00px;background:#efefef;"></div>
<div class="b" style="left:562.30px;top:452.00px;width:40.70px;height:20.00px;background:#e4ebf6;"></div>
<div class="b" style="left:562.30px;top:471.20px;width:40.70px;height:1.60px;background:#b4c7dd;"></div>
<div class="t" style="left:607.00px;top:451.98px;line-height:21px;font-size:16.50px;color:#161616;text-align:left;transform:scaleX(0.8050);transform-origin:left;">230400017</div>
<div class="t" style="left:717.00px;top:451.98px;line-height:21px;font-size:16.50px;color:#161616;text-align:left;transform:scaleX(0.8050);transform-origin:left;">Facture MENUISERIE JUILLAN - Cde : C230400017</div>
<div class="b" style="left:562.30px;top:472.00px;width:40.70px;height:20.00px;background:#e4ebf6;"></div>
<div class="b" style="left:562.30px;top:491.20px;width:40.70px;height:1.60px;background:#b4c7dd;"></div>
<div class="t" style="left:607.00px;top:471.98px;line-height:21px;font-size:16.50px;color:#161616;text-align:left;transform:scaleX(0.8050);transform-origin:left;">230400019</div>
<div class="t" style="left:717.00px;top:471.98px;line-height:21px;font-size:16.50px;color:#161616;text-align:left;transform:scaleX(0.8050);transform-origin:left;">ACOMPTE pour la commande C230400019</div>
<div class="b" style="left:603.00px;top:492.00px;width:545.00px;height:19.00px;background:#efefef;"></div>
<div class="b" style="left:562.30px;top:492.00px;width:40.70px;height:20.00px;background:#e4ebf6;"></div>
<div class="b" style="left:562.30px;top:511.20px;width:40.70px;height:1.60px;background:#b4c7dd;"></div>
<div class="t" style="left:607.00px;top:491.98px;line-height:21px;font-size:16.50px;color:#161616;text-align:left;transform:scaleX(0.8050);transform-origin:left;">230400020</div>
<div class="t" style="left:717.00px;top:491.98px;line-height:21px;font-size:16.50px;color:#161616;text-align:left;transform:scaleX(0.8050);transform-origin:left;">ACOMPTE pour la commande C230400020</div>
<div class="b" style="left:562.30px;top:512.00px;width:40.70px;height:20.00px;background:#e4ebf6;"></div>
<div class="b" style="left:562.30px;top:531.20px;width:40.70px;height:1.60px;background:#b4c7dd;"></div>
<div class="t" style="left:607.00px;top:511.98px;line-height:21px;font-size:16.50px;color:#161616;text-align:left;transform:scaleX(0.8050);transform-origin:left;">230400023</div>
<div class="t" style="left:717.00px;top:511.98px;line-height:21px;font-size:16.50px;color:#161616;text-align:left;transform:scaleX(0.8050);transform-origin:left;">Avoir sur Facture F230400036</div>
<div class="b" style="left:603.00px;top:532.00px;width:545.00px;height:19.00px;background:#efefef;"></div>
<div class="b" style="left:562.30px;top:532.00px;width:40.70px;height:20.00px;background:#e4ebf6;"></div>
<div class="b" style="left:562.30px;top:551.20px;width:40.70px;height:1.60px;background:#b4c7dd;"></div>
<div class="t" style="left:607.00px;top:531.98px;line-height:21px;font-size:16.50px;color:#161616;text-align:left;transform:scaleX(0.8050);transform-origin:left;">230400024</div>
<div class="t" style="left:717.00px;top:531.98px;line-height:21px;font-size:16.50px;color:#161616;text-align:left;transform:scaleX(0.8050);transform-origin:left;">Avoir sur Facture 230400022</div>
<div class="b" style="left:562.30px;top:552.00px;width:40.70px;height:20.00px;background:#e4ebf6;"></div>
<div class="b" style="left:562.30px;top:571.20px;width:40.70px;height:1.60px;background:#b4c7dd;"></div>
<div class="t" style="left:607.00px;top:551.98px;line-height:21px;font-size:16.50px;color:#161616;text-align:left;transform:scaleX(0.8050);transform-origin:left;">230400025</div>
<div class="t" style="left:717.00px;top:551.98px;line-height:21px;font-size:16.50px;color:#161616;text-align:left;transform:scaleX(0.8050);transform-origin:left;">Avoir sur Facture F230400036</div>
<div class="b" style="left:603.00px;top:572.00px;width:545.00px;height:19.00px;background:#efefef;"></div>
<div class="b" style="left:562.30px;top:572.00px;width:40.70px;height:20.00px;background:#e4ebf6;"></div>
<div class="b" style="left:562.30px;top:591.20px;width:40.70px;height:1.60px;background:#b4c7dd;"></div>
<div class="t" style="left:607.00px;top:571.98px;line-height:21px;font-size:16.50px;color:#161616;text-align:left;transform:scaleX(0.8050);transform-origin:left;">230600001</div>
<div class="t" style="left:717.00px;top:571.98px;line-height:21px;font-size:16.50px;color:#161616;text-align:left;transform:scaleX(0.8050);transform-origin:left;">Facture MENUISERIE JUILLAN - Cde : C230600001</div>
<div class="b" style="left:562.30px;top:592.00px;width:40.70px;height:20.00px;background:#e4ebf6;"></div>
<div class="b" style="left:562.30px;top:611.20px;width:40.70px;height:1.60px;background:#b4c7dd;"></div>
<div class="t" style="left:607.00px;top:591.98px;line-height:21px;font-size:16.50px;color:#161616;text-align:left;transform:scaleX(0.8050);transform-origin:left;">230600002</div>
<div class="t" style="left:717.00px;top:591.98px;line-height:21px;font-size:16.50px;color:#161616;text-align:left;transform:scaleX(0.8050);transform-origin:left;">Facture MENUISERIE JUILLAN - Cde : C230600004</div>
<div class="b" style="left:603.00px;top:612.00px;width:545.00px;height:19.00px;background:#efefef;"></div>
<div class="b" style="left:562.30px;top:612.00px;width:40.70px;height:20.00px;background:#e4ebf6;"></div>
<div class="b" style="left:562.30px;top:631.20px;width:40.70px;height:1.60px;background:#b4c7dd;"></div>
<div class="t" style="left:607.00px;top:611.98px;line-height:21px;font-size:16.50px;color:#161616;text-align:left;transform:scaleX(0.8050);transform-origin:left;">230600003</div>
<div class="t" style="left:717.00px;top:611.98px;line-height:21px;font-size:16.50px;color:#161616;text-align:left;transform:scaleX(0.8050);transform-origin:left;">Facture MENUISERIE JUILLAN - Cde : C230600006</div>
<div class="b" style="left:562.30px;top:632.00px;width:40.70px;height:20.00px;background:#e4ebf6;"></div>
<div class="b" style="left:562.30px;top:651.20px;width:40.70px;height:1.60px;background:#b4c7dd;"></div>
<div class="t" style="left:607.00px;top:631.98px;line-height:21px;font-size:16.50px;color:#161616;text-align:left;transform:scaleX(0.8050);transform-origin:left;">230600004</div>
<div class="t" style="left:717.00px;top:631.98px;line-height:21px;font-size:16.50px;color:#161616;text-align:left;transform:scaleX(0.8050);transform-origin:left;">ACOMPTE pour la commande C230600007</div>
<div class="b" style="left:603.00px;top:652.00px;width:545.00px;height:19.00px;background:#efefef;"></div>
<div class="b" style="left:562.30px;top:652.00px;width:40.70px;height:20.00px;background:#e4ebf6;"></div>
<div class="b" style="left:562.30px;top:671.20px;width:40.70px;height:1.60px;background:#b4c7dd;"></div>
<div class="t" style="left:607.00px;top:651.98px;line-height:21px;font-size:16.50px;color:#161616;text-align:left;transform:scaleX(0.8050);transform-origin:left;">230600005</div>
<div class="t" style="left:717.00px;top:651.98px;line-height:21px;font-size:16.50px;color:#161616;text-align:left;transform:scaleX(0.8050);transform-origin:left;">ACOMPTE pour la commande C230600006</div>
<div class="b" style="left:562.30px;top:672.00px;width:40.70px;height:20.00px;background:#e4ebf6;"></div>
<div class="b" style="left:562.30px;top:691.20px;width:40.70px;height:1.60px;background:#b4c7dd;"></div>
<div class="t" style="left:607.00px;top:671.98px;line-height:21px;font-size:16.50px;color:#161616;text-align:left;transform:scaleX(0.8050);transform-origin:left;">230600006</div>
<div class="t" style="left:717.00px;top:671.98px;line-height:21px;font-size:16.50px;color:#161616;text-align:left;transform:scaleX(0.8050);transform-origin:left;">ACOMPTE pour la commande C230500006</div>
<div class="b" style="left:603.00px;top:692.00px;width:545.00px;height:19.00px;background:#efefef;"></div>
<div class="b" style="left:562.30px;top:692.00px;width:40.70px;height:20.00px;background:#e4ebf6;"></div>
<div class="b" style="left:562.30px;top:711.20px;width:40.70px;height:1.60px;background:#b4c7dd;"></div>
<div class="t" style="left:607.00px;top:691.98px;line-height:21px;font-size:16.50px;color:#161616;text-align:left;transform:scaleX(0.8050);transform-origin:left;">230600013</div>
<div class="t" style="left:717.00px;top:691.98px;line-height:21px;font-size:16.50px;color:#161616;text-align:left;transform:scaleX(0.8050);transform-origin:left;">Avoir sur Facture 230600003</div>
<div class="b" style="left:562.30px;top:712.00px;width:40.70px;height:20.00px;background:#e4ebf6;"></div>
<div class="b" style="left:562.30px;top:731.20px;width:40.70px;height:1.60px;background:#b4c7dd;"></div>
<div class="t" style="left:607.00px;top:711.98px;line-height:21px;font-size:16.50px;color:#161616;text-align:left;transform:scaleX(0.8050);transform-origin:left;">230600014</div>
<div class="t" style="left:717.00px;top:711.98px;line-height:21px;font-size:16.50px;color:#161616;text-align:left;transform:scaleX(0.8050);transform-origin:left;">Avoir sur Facture 230600003</div>
<div class="b" style="left:603.00px;top:732.00px;width:545.00px;height:19.00px;background:#efefef;"></div>
<div class="b" style="left:562.30px;top:732.00px;width:40.70px;height:20.00px;background:#e4ebf6;"></div>
<div class="b" style="left:562.30px;top:751.20px;width:40.70px;height:1.60px;background:#b4c7dd;"></div>
<div class="t" style="left:607.00px;top:731.98px;line-height:21px;font-size:16.50px;color:#161616;text-align:left;transform:scaleX(0.8050);transform-origin:left;">230600016</div>
<div class="t" style="left:717.00px;top:731.98px;line-height:21px;font-size:16.50px;color:#161616;text-align:left;transform:scaleX(0.8050);transform-origin:left;">Facture MENUISERIE JUILLAN - Cde : C230600007</div>
<div class="b" style="left:562.30px;top:752.00px;width:40.70px;height:20.00px;background:#e4ebf6;"></div>
<div class="b" style="left:562.30px;top:771.20px;width:40.70px;height:1.60px;background:#b4c7dd;"></div>
<div class="t" style="left:607.00px;top:751.98px;line-height:21px;font-size:16.50px;color:#161616;text-align:left;transform:scaleX(0.8050);transform-origin:left;">230700001</div>
<div class="t" style="left:717.00px;top:751.98px;line-height:21px;font-size:16.50px;color:#161616;text-align:left;transform:scaleX(0.8050);transform-origin:left;">Facture MENUISERIE JUILLAN - Cde : C230600010</div>
<div class="b" style="left:603.00px;top:772.00px;width:545.00px;height:19.00px;background:#efefef;"></div>
<div class="b" style="left:562.30px;top:772.00px;width:40.70px;height:20.00px;background:#e4ebf6;"></div>
<div class="b" style="left:562.30px;top:791.20px;width:40.70px;height:1.60px;background:#b4c7dd;"></div>
<div class="t" style="left:607.00px;top:771.98px;line-height:21px;font-size:16.50px;color:#161616;text-align:left;transform:scaleX(0.8050);transform-origin:left;">230700002</div>
<div class="t" style="left:717.00px;top:771.98px;line-height:21px;font-size:16.50px;color:#161616;text-align:left;transform:scaleX(0.8050);transform-origin:left;">ACOMPTE pour la commande C230700004</div>
<div class="b" style="left:562.30px;top:792.00px;width:40.70px;height:20.00px;background:#e4ebf6;"></div>
<div class="b" style="left:562.30px;top:811.20px;width:40.70px;height:1.60px;background:#b4c7dd;"></div>
<div class="t" style="left:607.00px;top:791.98px;line-height:21px;font-size:16.50px;color:#161616;text-align:left;transform:scaleX(0.8050);transform-origin:left;">230700006</div>
<div class="t" style="left:717.00px;top:791.98px;line-height:21px;font-size:16.50px;color:#161616;text-align:left;transform:scaleX(0.8050);transform-origin:left;">ACOMPTE pour la commande C230700020</div>
<div class="b" style="left:602.50px;top:207.50px;width:1.20px;height:596.00px;background:#b8cbe0;"></div>
<div class="b" style="left:562.30px;top:231.00px;width:40.70px;height:1.60px;background:#f0a040;"></div>
<div class="b" style="left:714px;top:232px;width:0;height:571px;border-left:1px dotted #b8b8b8"></div>
<div class="b" style="left:604px;top:232.8px;width:111.5px;height:20.5px;border:1px solid #000;border-right-width:2.2px;border-bottom-width:2.5px;background:#fff"></div>
<div class="t" style="left:607.00px;top:231.98px;line-height:21px;font-size:16.50px;color:#161616;text-align:left;transform:scaleX(0.8050);transform-origin:left;">161200004</div>
<div class="b" style="left:1147.00px;top:207.50px;width:21.00px;height:596.00px;background:#7096be;"></div>
<div class="b" style="left:1147.00px;top:207.50px;width:21.00px;height:235.00px;background:linear-gradient(90deg,#dbe7f8 0,#dbe7f8 45%,#c3d6f1 45%,#c3d6f1 100%);"></div>
<div class="b" style="left:1147px;top:207.5px;width:21px;height:234.5px;border:1.3px solid #7286ad;border-top-width:1px"></div>
<div class="b" style="left:1147.00px;top:226.00px;width:21.00px;height:1.50px;background:#7286ad;"></div>
<svg class="b" style="left:1151.50px;top:213.00px;" width="12.00" height="7.00" viewBox="0 0 12 7"><path d="M0.5 6.5 H11.5 L6 0.5 Z" fill="#404a66"/></svg>
<div class="b" style="left:1168.00px;top:205.50px;width:1.00px;height:598.00px;background:#6f6f6f;"></div>
<div class="b" style="left:1169.00px;top:205.50px;width:1.00px;height:598.00px;background:#fff;"></div>
<div class="b" style="left:1170.00px;top:205.00px;width:5.00px;height:598.00px;background:#9a9a9a;"></div>
<div class="b" style="left:1175.00px;top:205.00px;width:1.00px;height:598.00px;background:#e8e8e8;"></div>
<div class="b" style="left:1176.00px;top:205.00px;width:1.00px;height:598.00px;background:#b0b0b0;"></div>
<div class="b" style="left:1177.00px;top:205.00px;width:741.00px;height:598.00px;background:#f0f0f0;"></div>
<svg class="b" style="left:1170.00px;top:205.00px;" width="748.00" height="35.00" viewBox="1170 205 748 35"><path d="M1813.0 234.0 L1824.0 213.5 Q1825.5 210.5 1829.5 210.5 L1878.0 210.5 Q1882.0 210.5 1883.5 213.5 L1882.0 234.0 Z" fill="#f0f0f0"/><path d="M1813.0 234.0 L1824.0 213.5 Q1825.5 210.5 1829.5 210.5 L1878.0 210.5 Q1882.0 210.5 1883.5 213.5 L1882.0 234.0" fill="none" stroke="#9c9c9c" stroke-width="1"/><path d="M1701.0 234.0 L1712.0 213.5 Q1713.5 210.5 1717.5 210.5 L1804.5 210.5 Q1808.5 210.5 1810.0 213.5 L1819.5 234.0 Z" fill="#f0f0f0"/><path d="M1701.0 234.0 L1712.0 213.5 Q1713.5 210.5 1717.5 210.5 L1804.5 210.5 Q1808.5 210.5 1810.0 213.5 L1819.5 234.0" fill="none" stroke="#9c9c9c" stroke-width="1"/><path d="M1645.0 234.0 L1656.0 213.5 Q1657.5 210.5 1661.5 210.5 L1693.5 210.5 Q1697.5 210.5 1699.0 213.5 L1708.5 234.0 Z" fill="#f0f0f0"/><path d="M1645.0 234.0 L1656.0 213.5 Q1657.5 210.5 1661.5 210.5 L1693.5 210.5 Q1697.5 210.5 1699.0 213.5 L1708.5 234.0" fill="none" stroke="#9c9c9c" stroke-width="1"/><path d="M1541.0 234.0 L1552.0 213.5 Q1553.5 210.5 1557.5 210.5 L1637.0 210.5 Q1641.0 210.5 1642.5 213.5 L1652.0 234.0 Z" fill="#f0f0f0"/><path d="M1541.0 234.0 L1552.0 213.5 Q1553.5 210.5 1557.5 210.5 L1637.0 210.5 Q1641.0 210.5 1642.5 213.5 L1652.0 234.0" fill="none" stroke="#9c9c9c" stroke-width="1"/><path d="M1432.7 234.0 L1443.7 213.5 Q1445.2 210.5 1449.2 210.5 L1533.0 210.5 Q1537.0 210.5 1538.5 213.5 L1548.0 234.0 Z" fill="#f0f0f0"/><path d="M1432.7 234.0 L1443.7 213.5 Q1445.2 210.5 1449.2 210.5 L1533.0 210.5 Q1537.0 210.5 1538.5 213.5 L1548.0 234.0" fill="none" stroke="#9c9c9c" stroke-width="1"/><path d="M1306.0 234.0 L1317.0 213.5 Q1318.5 210.5 1322.5 210.5 L1428.3 210.5 Q1432.3 210.5 1433.8 213.5 L1443.3 234.0 Z" fill="#f0f0f0"/><path d="M1306.0 234.0 L1317.0 213.5 Q1318.5 210.5 1322.5 210.5 L1428.3 210.5 Q1432.3 210.5 1433.8 213.5 L1443.3 234.0" fill="none" stroke="#9c9c9c" stroke-width="1"/><path d="M1183.0 234.0 L1194.0 213.5 Q1195.5 210.5 1199.5 210.5 L1298.7 210.5 Q1302.7 210.5 1304.2 213.5 L1313.7 234.0 Z" fill="#fafafa"/><path d="M1183.0 234.0 L1194.0 213.5 Q1195.5 210.5 1199.5 210.5 L1298.7 210.5 Q1302.7 210.5 1304.2 213.5 L1313.7 234.0" fill="none" stroke="#9c9c9c" stroke-width="1"/></svg>
<div class="b" style="left:1177.00px;top:233.80px;width:6.00px;height:1.00px;background:#a0a0a0;"></div>
<div class="b" style="left:1881.00px;top:233.80px;width:35.50px;height:1.00px;background:#a0a0a0;"></div>
<div class="b" style="left:1177.00px;top:234.00px;width:1.00px;height:569.00px;background:#a0a0a0;"></div>
<div class="b" style="left:1915.50px;top:234.00px;width:1.00px;height:569.00px;background:#a0a0a0;"></div>
<div class="t" style="left:1220.00px;top:212.74px;line-height:18px;font-size:14.60px;color:#000;font-weight:bold;text-align:left;">Généralités</div>
<div class="t" style="left:1335.60px;top:210.58px;line-height:21px;font-size:16.50px;color:#1a1a1a;text-align:left;transform:scaleX(0.7800);transform-origin:left;">Adr. Facturation</div>
<div class="t" style="left:1463.30px;top:210.58px;line-height:21px;font-size:16.50px;color:#1a1a1a;text-align:left;transform:scaleX(0.7800);transform-origin:left;">Comptabilité</div>
<div class="t" style="left:1570.00px;top:210.58px;line-height:21px;font-size:16.50px;color:#1a1a1a;text-align:left;transform:scaleX(0.7800);transform-origin:left;">Plus-Values</div>
<div class="t" style="left:1674.00px;top:210.58px;line-height:21px;font-size:16.50px;color:#1a1a1a;text-align:left;transform:scaleX(0.7800);transform-origin:left;">Prix</div>
<div class="t" style="left:1729.40px;top:210.58px;line-height:21px;font-size:16.50px;color:#1a1a1a;text-align:left;transform:scaleX(0.7800);transform-origin:left;">Commentaire</div>
<div class="t" style="left:1841.20px;top:210.58px;line-height:21px;font-size:16.50px;color:#1a1a1a;text-align:left;transform:scaleX(0.7800);transform-origin:left;">Divers</div>
<svg class="b" style="left:1197.00px;top:212.00px;" width="18.00" height="21.00" viewBox="0 0 18 21"><path d="M6 1 H13 L17 5 V16 H6 Z" fill="#efe9dc" stroke="#b8ad98" stroke-width="0.8"/><path d="M1 5 H8 L12 9 V20 H1 Z" fill="#f4efe4" stroke="#b8ad98" stroke-width="0.8"/></svg>
<svg class="b" style="left:1311.00px;top:214.00px;" width="20.00" height="16.00" viewBox="0 0 20 16"><rect x="3" y="3" width="16" height="11" rx="1" fill="#c9dcf5" stroke="#6e95cc" stroke-width="0.9" transform="rotate(-15 11 8)"/><circle cx="5" cy="5" r="3.5" fill="#9ec1ea"/></svg>
<svg class="b" style="left:1442.00px;top:214.00px;" width="18.00" height="19.00" viewBox="0 0 18 19"><rect x="1" y="2" width="12" height="14" fill="#d8d8d8" stroke="#9a9a9a" stroke-width="0.8"/><rect x="6" y="7" width="11" height="11" fill="#c8c8c8" stroke="#8a8a8a" stroke-width="0.8"/></svg>
<div class="t" style="left:956.00px;top:208.32px;width:1200px;line-height:26px;font-size:21.00px;color:#7f9a22;font-weight:bold;text-align:center;">$</div>
<svg class="b" style="left:1649.00px;top:213.00px;" width="21.00" height="17.00" viewBox="0 0 21 17"><rect x="1" y="9" width="19" height="7" fill="#e6edc8" stroke="#a9b780" stroke-width="0.8"/><circle cx="7" cy="6" r="4" fill="#e8d79a" stroke="#b9a25a" stroke-width="0.8"/><circle cx="13" cy="7" r="3.5" fill="#e8d79a" stroke="#b9a25a" stroke-width="0.8"/></svg>
<svg class="b" style="left:1709.00px;top:213.00px;" width="16.00" height="19.00" viewBox="0 0 16 19"><path d="M14 1.5 L2.5 17.5" stroke="#1a1a1a" stroke-width="2.4" stroke-linecap="round"/></svg>
<svg class="b" style="left:1821.00px;top:214.00px;" width="15.00" height="18.00" viewBox="0 0 15 18"><path d="M1 1 H10 L14 5 V17 H1 Z" fill="#f6f6f6" stroke="#bdbdbd" stroke-width="0.8"/><path d="M4 8 L10 14 M10 8 L4 14" stroke="#2e8a3e" stroke-width="1.8"/></svg>
<svg class="b" style="left:1886.00px;top:212.00px;" width="26.00" height="13.00" viewBox="0 0 26 13"><path d="M7.5 1 V11.5 L1.5 6.2 Z" fill="#fff" stroke="#000" stroke-width="1.1"/><path d="M18 1 V11.5 L24.5 6.2 Z" fill="#000"/></svg>
<div class="t" style="left:108.00px;top:242.58px;width:1200px;line-height:18px;font-size:14.50px;color:#161616;font-weight:bold;text-align:right;">Facture</div>
<div class="t" style="left:1330.00px;top:240.38px;line-height:21px;font-size:16.50px;color:#161616;text-align:left;transform:scaleX(0.8050);transform-origin:left;">161200004</div>
<div class="t" style="left:110.00px;top:264.13px;width:1200px;line-height:21px;font-size:16.50px;color:#161616;text-align:right;transform:scaleX(0.8050);transform-origin:right;">Désignation</div>
<div class="t" style="left:1330.00px;top:264.13px;line-height:21px;font-size:16.50px;color:#161616;text-align:left;transform:scaleX(0.8050);transform-origin:left;">ACOMPTE pour la commande C161200020</div>
<div class="t" style="left:110.00px;top:287.88px;width:1200px;line-height:21px;font-size:16.50px;color:#161616;text-align:right;transform:scaleX(0.8050);transform-origin:right;">Nature</div>
<div class="t" style="left:1330.00px;top:287.88px;line-height:21px;font-size:16.50px;color:#161616;text-align:left;transform:scaleX(0.8050);transform-origin:left;">FACTURE</div>
<div class="b" style="left:1442.5px;top:288.2px;width:17.5px;height:17px;background:#fff;border:2px solid #c6c6c6"></div><div class="t" style="left:851.20px;top:287.75px;width:1200px;line-height:18px;font-size:14.00px;color:#000;font-weight:bold;text-align:center;">?</div>
<div class="t" style="left:1467.60px;top:287.88px;line-height:21px;font-size:16.50px;color:#161616;text-align:left;transform:scaleX(0.8050);transform-origin:left;">Facture</div>
<div class="t" style="left:110.00px;top:311.63px;width:1200px;line-height:21px;font-size:16.50px;color:#161616;text-align:right;transform:scaleX(0.8050);transform-origin:right;">Gestionnaire</div>
<div class="t" style="left:1330.00px;top:311.63px;line-height:21px;font-size:16.50px;color:#161616;text-align:left;transform:scaleX(0.8050);transform-origin:left;">Gen</div>
<div class="b" style="left:1442.5px;top:311.9px;width:17.5px;height:17px;background:#fff;border:2px solid #c6c6c6"></div><div class="t" style="left:851.20px;top:311.50px;width:1200px;line-height:18px;font-size:14.00px;color:#000;font-weight:bold;text-align:center;">?</div>
<div class="t" style="left:1467.60px;top:311.63px;line-height:21px;font-size:16.50px;color:#161616;text-align:left;transform:scaleX(0.8050);transform-origin:left;">Gestionnaire défaut</div>
<div class="t" style="left:110.00px;top:335.38px;width:1200px;line-height:21px;font-size:16.50px;color:#161616;text-align:right;transform:scaleX(0.8050);transform-origin:right;">Affaire</div>
<div class="b" style="left:1537.0px;top:335.7px;width:17.5px;height:17px;background:#fff;border:2px solid #c6c6c6"></div><div class="t" style="left:945.70px;top:335.25px;width:1200px;line-height:18px;font-size:14.00px;color:#000;font-weight:bold;text-align:center;">?</div>
<div class="t" style="left:110.00px;top:359.13px;width:1200px;line-height:21px;font-size:16.50px;color:#161616;text-align:right;transform:scaleX(0.8050);transform-origin:right;">Client</div>
<div class="t" style="left:1330.00px;top:359.13px;line-height:21px;font-size:16.50px;color:#161616;text-align:left;transform:scaleX(0.8050);transform-origin:left;">000008</div>
<div class="b" style="left:1537.0px;top:359.4px;width:17.5px;height:17px;background:#fff;border:2px solid #c6c6c6"></div><div class="t" style="left:945.70px;top:359.00px;width:1200px;line-height:18px;font-size:14.00px;color:#000;font-weight:bold;text-align:center;">?</div>
<div class="t" style="left:1561.50px;top:359.13px;line-height:21px;font-size:16.50px;color:#161616;text-align:left;transform:scaleX(0.8050);transform-origin:left;">BIGMAT CAUDEBEC</div>
<div class="t" style="left:110.00px;top:382.88px;width:1200px;line-height:21px;font-size:16.50px;color:#161616;text-align:right;transform:scaleX(0.8050);transform-origin:right;">Réseau</div>
<div class="t" style="left:1330.00px;top:382.88px;line-height:21px;font-size:16.50px;color:#161616;text-align:left;transform:scaleX(0.8050);transform-origin:left;">01</div>
<div class="b" style="left:1442.5px;top:383.2px;width:17.5px;height:17px;background:#fff;border:2px solid #c6c6c6"></div><div class="t" style="left:851.20px;top:382.75px;width:1200px;line-height:18px;font-size:14.00px;color:#000;font-weight:bold;text-align:center;">?</div>
<div class="t" style="left:110.00px;top:406.63px;width:1200px;line-height:21px;font-size:16.50px;color:#161616;text-align:right;transform:scaleX(0.8050);transform-origin:right;">Devise</div>
<div class="t" style="left:1330.00px;top:406.63px;line-height:21px;font-size:16.50px;color:#161616;text-align:left;transform:scaleX(0.8050);transform-origin:left;">EUR</div>
<div class="b" style="left:1442.5px;top:406.9px;width:17.5px;height:17px;background:#fff;border:2px solid #c6c6c6"></div><div class="t" style="left:851.20px;top:406.50px;width:1200px;line-height:18px;font-size:14.00px;color:#000;font-weight:bold;text-align:center;">?</div>
<div class="t" style="left:1467.60px;top:406.63px;line-height:21px;font-size:16.50px;color:#161616;text-align:left;transform:scaleX(0.8050);transform-origin:left;">Euro</div>
<div class="t" style="left:110.00px;top:430.38px;width:1200px;line-height:21px;font-size:16.50px;color:#161616;text-align:right;transform:scaleX(0.8050);transform-origin:right;">Date Facture</div>
<div class="t" style="left:1330.40px;top:432.32px;line-height:18px;font-size:14.20px;color:#4a4a72;font-family:'Liberation Mono',monospace;text-align:left;">14/12/2016</div>
<div class="b" style="left:1442.5px;top:430.7px;width:17.5px;height:17px;background:#fff;border:2px solid #c6c6c6"></div><div class="t" style="left:851.20px;top:430.25px;width:1200px;line-height:18px;font-size:14.00px;color:#000;font-weight:bold;text-align:center;">?</div>
<div class="t" style="left:110.00px;top:454.13px;width:1200px;line-height:21px;font-size:16.50px;color:#161616;text-align:right;transform:scaleX(0.8050);transform-origin:right;">Client Règleme</div>
<div class="b" style="left:1326px;top:458px;width:13px;height:13px;background:#f4f4f4;border:1px solid #d4d4d4"></div>
<svg class="b" style="left:1327.50px;top:459.50px;" width="10.00" height="10.00" viewBox="0 0 10 10"><path d="M1.5 5 L4 7.5 L8.5 2" stroke="#b8b8b8" stroke-width="1.2" fill="none"/></svg>
<div class="t" style="left:110.00px;top:477.88px;width:1200px;line-height:21px;font-size:16.50px;color:#161616;text-align:right;transform:scaleX(0.8050);transform-origin:right;">Client Règlemt</div>
<div class="b" style="left:1537.0px;top:478.2px;width:17.5px;height:17px;background:#fff;border:2px solid #c6c6c6"></div><div class="t" style="left:945.70px;top:477.75px;width:1200px;line-height:18px;font-size:14.00px;color:#000;font-weight:bold;text-align:center;">?</div>
<div class="t" style="left:110.00px;top:501.63px;width:1200px;line-height:21px;font-size:16.50px;color:#161616;text-align:right;transform:scaleX(0.8050);transform-origin:right;">Rés. Règlement</div>
<div class="b" style="left:1442.5px;top:501.9px;width:17.5px;height:17px;background:#fff;border:2px solid #c6c6c6"></div><div class="t" style="left:851.20px;top:501.50px;width:1200px;line-height:18px;font-size:14.00px;color:#000;font-weight:bold;text-align:center;">?</div>
<div class="t" style="left:106.50px;top:525.38px;width:1200px;line-height:21px;font-size:16.50px;color:#161616;text-align:right;transform:scaleX(0.8050);transform-origin:right;">Date Règlemen</div>
<div class="t" style="left:1330.40px;top:527.32px;line-height:18px;font-size:14.20px;color:#4a4a72;font-family:'Liberation Mono',monospace;text-align:left;">10/02/2017</div>
<div class="b" style="left:1442.5px;top:525.7px;width:17.5px;height:17px;background:#fff;border:2px solid #c6c6c6"></div><div class="t" style="left:851.20px;top:525.25px;width:1200px;line-height:18px;font-size:14.00px;color:#000;font-weight:bold;text-align:center;">?</div>
<div class="t" style="left:103.50px;top:549.13px;width:1200px;line-height:21px;font-size:16.50px;color:#161616;text-align:right;transform:scaleX(0.8050);transform-origin:right;">Mode Règlemer</div>
<div class="t" style="left:1330.00px;top:549.13px;line-height:21px;font-size:16.50px;color:#161616;text-align:left;transform:scaleX(0.8050);transform-origin:left;">VIR</div>
<div class="b" style="left:1442.5px;top:549.5px;width:17.5px;height:17px;background:#fff;border:2px solid #c6c6c6"></div><div class="t" style="left:851.20px;top:549.00px;width:1200px;line-height:18px;font-size:14.00px;color:#000;font-weight:bold;text-align:center;">?</div>
<div class="t" style="left:1467.60px;top:549.13px;line-height:21px;font-size:16.50px;color:#161616;text-align:left;transform:scaleX(0.8050);transform-origin:left;">Virement</div>
<div class="t" style="left:110.00px;top:572.88px;width:1200px;line-height:21px;font-size:16.50px;color:#161616;text-align:right;transform:scaleX(0.8050);transform-origin:right;">Taux de TVA</div>
<div class="t" style="left:1330.00px;top:572.88px;line-height:21px;font-size:16.50px;color:#161616;text-align:left;transform:scaleX(0.8050);transform-origin:left;">1</div>
<div class="b" style="left:1442.5px;top:573.2px;width:17.5px;height:17px;background:#fff;border:2px solid #c6c6c6"></div><div class="t" style="left:851.20px;top:572.75px;width:1200px;line-height:18px;font-size:14.00px;color:#000;font-weight:bold;text-align:center;">?</div>
<div class="t" style="left:1467.60px;top:572.88px;line-height:21px;font-size:16.50px;color:#161616;text-align:left;transform:scaleX(0.8050);transform-origin:left;">TVA 20 %</div>
<div class="t" style="left:110.00px;top:596.63px;width:1200px;line-height:21px;font-size:16.50px;color:#161616;text-align:right;transform:scaleX(0.8050);transform-origin:right;">Fac. Réglée</div>
<div class="b" style="left:1326.5px;top:600px;width:12.5px;height:12.5px;background:#fff;border:1px solid #cfcfcf"></div>
<div class="t" style="left:110.00px;top:620.38px;width:1200px;line-height:21px;font-size:16.50px;color:#161616;text-align:right;transform:scaleX(0.8050);transform-origin:right;">Escompte</div>
<div class="t" style="left:243.60px;top:622.32px;width:1200px;line-height:18px;font-size:14.20px;color:#4a4a72;font-family:'Liberation Mono',monospace;text-align:right;">0,000</div>
<div class="t" style="left:1469.80px;top:620.38px;line-height:21px;font-size:16.50px;color:#161616;text-align:left;transform:scaleX(0.8050);transform-origin:left;">EUR</div>
<div class="t" style="left:110.00px;top:644.13px;width:1200px;line-height:21px;font-size:16.50px;color:#161616;text-align:right;transform:scaleX(0.8050);transform-origin:right;">Fac. Acompte</div>
<div class="b" style="left:1326.5px;top:644px;width:560px;height:78px;background:#f0f0f0;border:1.3px solid #828282"></div>
<div class="b" style="left:1862.00px;top:645.50px;width:1.00px;height:75.00px;background:#e4e4e4;"></div>
<svg class="b" style="left:1867.00px;top:651.00px;" width="12.00" height="8.00" viewBox="0 0 12 8"><path d="M1.5 6.5 L6 2 L10.5 6.5" stroke="#b4b4b4" stroke-width="1.3" fill="none"/></svg>
<svg class="b" style="left:1867.00px;top:705.00px;" width="12.00" height="8.00" viewBox="0 0 12 8"><path d="M1.5 1.5 L6 6 L10.5 1.5" stroke="#b4b4b4" stroke-width="1.3" fill="none"/></svg>
<div class="t" style="left:110.00px;top:727.68px;width:1200px;line-height:21px;font-size:16.50px;color:#161616;text-align:right;transform:scaleX(0.8050);transform-origin:right;">Répartition Acompte</div>
<div class="b" style="left:1327.30px;top:726.80px;width:27.70px;height:26.80px;background:#c9c9c9;"></div>
<svg class="b" style="left:1327.00px;top:726.00px;" width="28.00" height="28.00" viewBox="1327 726 28 28"><g stroke="#000" fill="none" stroke-linecap="round"><path d="M1343.6 729.8 L1351.9 730.1" stroke-width="2.6"/><path d="M1333.4 746 L1341.7 746.5" stroke-width="2.8"/><path d="M1334.3 740.8 L1343.3 730.8" stroke-width="1.1" stroke-dasharray="1.4 0.9"/><path d="M1349.9 731.5 L1348.2 741.2 Q1346.7 743.2 1345.3 741.2 L1344.4 736.6 L1340 744.6" stroke-width="1.3"/><path d="M1338.9 737.6 L1337.4 744.4" stroke-width="1.1" stroke-dasharray="1.4 0.9"/><path d="M1335.6 741.5 L1336.6 738.5" stroke-width="1.1"/></g></svg>
<div class="t" style="left:110.00px;top:757.08px;width:1200px;line-height:21px;font-size:16.50px;color:#161616;text-align:right;transform:scaleX(0.8050);transform-origin:right;">Acompte</div>
<div class="t" style="left:243.60px;top:759.62px;width:1200px;line-height:18px;font-size:14.20px;color:#4a4a72;font-family:'Liberation Mono',monospace;text-align:right;">100,000</div>
<div class="t" style="left:1469.80px;top:757.08px;line-height:21px;font-size:16.50px;color:#161616;text-align:left;transform:scaleX(0.8050);transform-origin:left;">EUR</div>
<div class="t" style="left:110.00px;top:780.98px;width:1200px;line-height:21px;font-size:16.50px;color:#161616;text-align:right;transform:scaleX(0.8050);transform-origin:right;">Eco-Part. ?</div>
<div class="b" style="left:1326.5px;top:786px;width:12.5px;height:12.5px;background:#fff;border:1px solid #cfcfcf"></div>
</body></html>
